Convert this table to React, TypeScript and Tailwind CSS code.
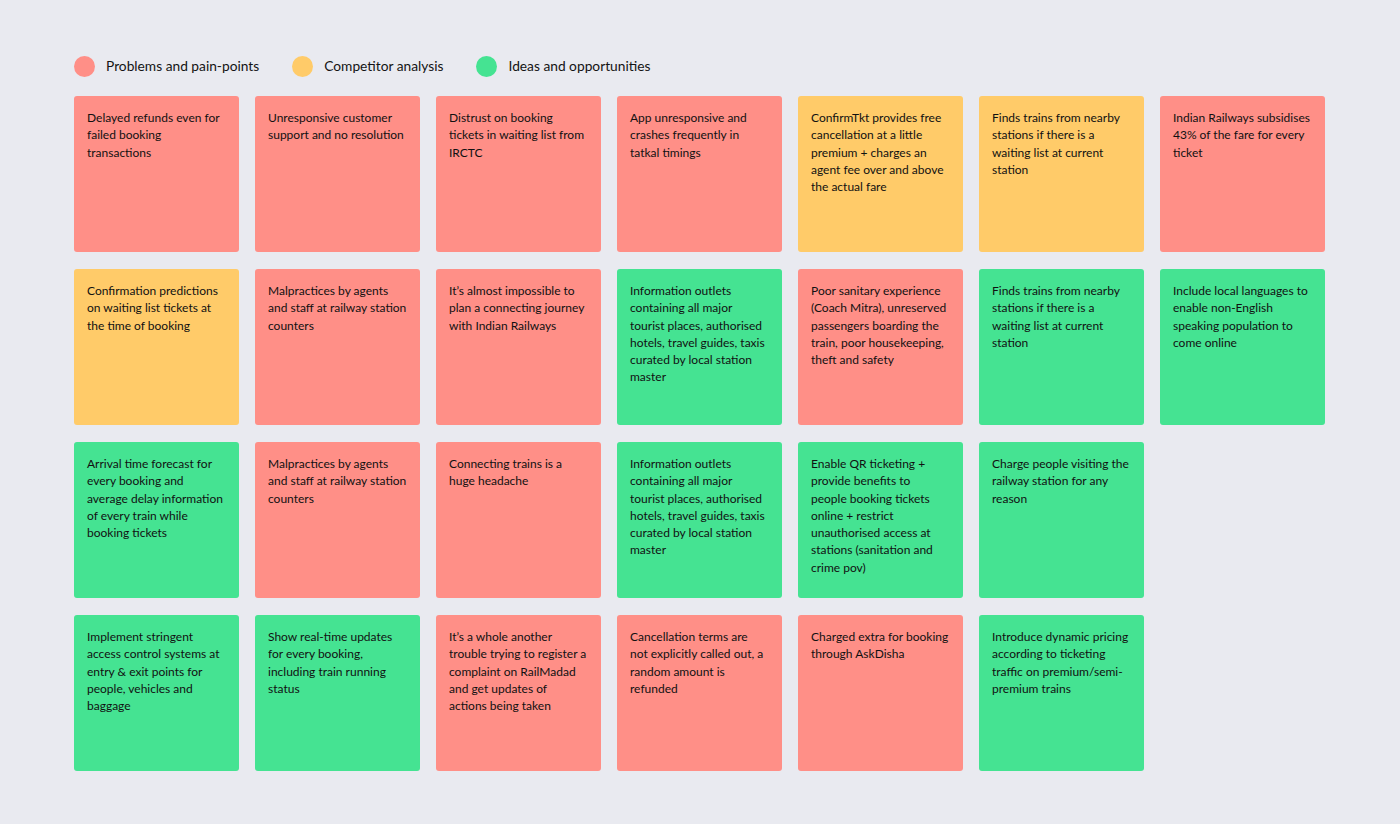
import React from "react";

type C = "r" | "y" | "g";
const bg: Record<C, string> = {
  r: "bg-[#ff8f87]",
  y: "bg-[#ffcb69]",
  g: "bg-[#45e392]",
};

const info = [
  "Information outlets",
  "containing all major",
  "tourist places, authorised",
  "hotels, travel guides, taxis",
  "curated by local station",
  "master",
];
const malp = ["Malpractices by agents", "and staff at railway station", "counters"];
const finds = ["Finds trains from nearby", "stations if there is a", "waiting list at current", "station"];

const cards: ({ c: C; t: string[] } | null)[] = [
  { c: "r", t: ["Delayed refunds even for", "failed booking", "transactions"] },
  { c: "r", t: ["Unresponsive customer", "support and no resolution"] },
  { c: "r", t: ["Distrust on booking", "tickets in waiting list from", "IRCTC"] },
  { c: "r", t: ["App unresponsive and", "crashes frequently in", "tatkal timings"] },
  { c: "y", t: ["ConfirmTkt provides free", "cancellation at a little", "premium + charges an", "agent fee over and above", "the actual fare"] },
  { c: "y", t: finds },
  { c: "r", t: ["Indian Railways subsidises", "43% of the fare for every", "ticket"] },

  { c: "y", t: ["Confirmation predictions", "on waiting list tickets at", "the time of booking"] },
  { c: "r", t: malp },
  { c: "r", t: ["It\u2019s almost impossible to", "plan a connecting journey", "with Indian Railways"] },
  { c: "g", t: info },
  { c: "r", t: ["Poor sanitary experience", "(Coach Mitra), unreserved", "passengers boarding the", "train, poor housekeeping,", "theft and safety"] },
  { c: "g", t: finds },
  { c: "g", t: ["Include local languages to", "enable non-English", "speaking population to", "come online"] },

  { c: "g", t: ["Arrival time forecast for", "every booking and", "average delay information", "of every train while", "booking tickets"] },
  { c: "r", t: malp },
  { c: "r", t: ["Connecting trains is a", "huge headache"] },
  { c: "g", t: info },
  { c: "g", t: ["Enable QR ticketing +", "provide benefits to", "people booking tickets", "online + restrict", "unauthorised access at", "stations (sanitation and", "crime pov)"] },
  { c: "g", t: ["Charge people visiting the", "railway station for any", "reason"] },
  null,

  { c: "g", t: ["Implement stringent", "access control systems at", "entry & exit points for", "people, vehicles and", "baggage"] },
  { c: "g", t: ["Show real-time updates", "for every booking,", "including train running", "status"] },
  { c: "r", t: ["It\u2019s a whole another", "trouble trying to register a", "complaint on RailMadad", "and get updates of", "actions being taken"] },
  { c: "r", t: ["Cancellation terms are", "not explicitly called out, a", "random amount is", "refunded"] },
  { c: "r", t: ["Charged extra for booking", "through AskDisha"] },
  { c: "g", t: ["Introduce dynamic pricing", "according to ticketing", "traffic on premium/semi-", "premium trains"] },
  null,
];

function Legend({ color, label }: { color: string; label: string }) {
  return (
    <div className="flex items-center gap-[11px]">
      <span className={`block w-[21px] h-[21px] rounded-full ${color}`} />
      <span className="text-[13.75px] text-[#141414]">{label}</span>
    </div>
  );
}

export default function App() {
  return (
    <div
      className="w-[1400px] h-[824px] bg-[#e9eaf0] overflow-hidden pl-[74px] pt-[56px]"
      style={{ fontFamily: "Lato, 'Open Sans', sans-serif" }}
    >
      <div className="flex items-center gap-[33px] h-[21px]">
        <Legend color="bg-[#ff8f87]" label="Problems and pain-points" />
        <Legend color="bg-[#ffcb69]" label="Competitor analysis" />
        <Legend color="bg-[#45e392]" label="Ideas and opportunities" />
      </div>
      <div className="mt-[19px] grid grid-cols-[repeat(7,165px)] auto-rows-[156px] gap-x-[16px] gap-y-[17px]">
        {cards.map((card, i) =>
          card ? (
            <div
              key={i}
              className={`${bg[card.c]} rounded-[3px] pl-[13px] pr-[8px] pt-[13px] text-[12px] leading-[17.3px] text-[#111111] whitespace-nowrap`}
            >
              {card.t.map((l, j) => (
                <div key={j}>{l}</div>
              ))}
            </div>
          ) : (
            <div key={i} />
          )
        )}
      </div>
    </div>
  );
}
